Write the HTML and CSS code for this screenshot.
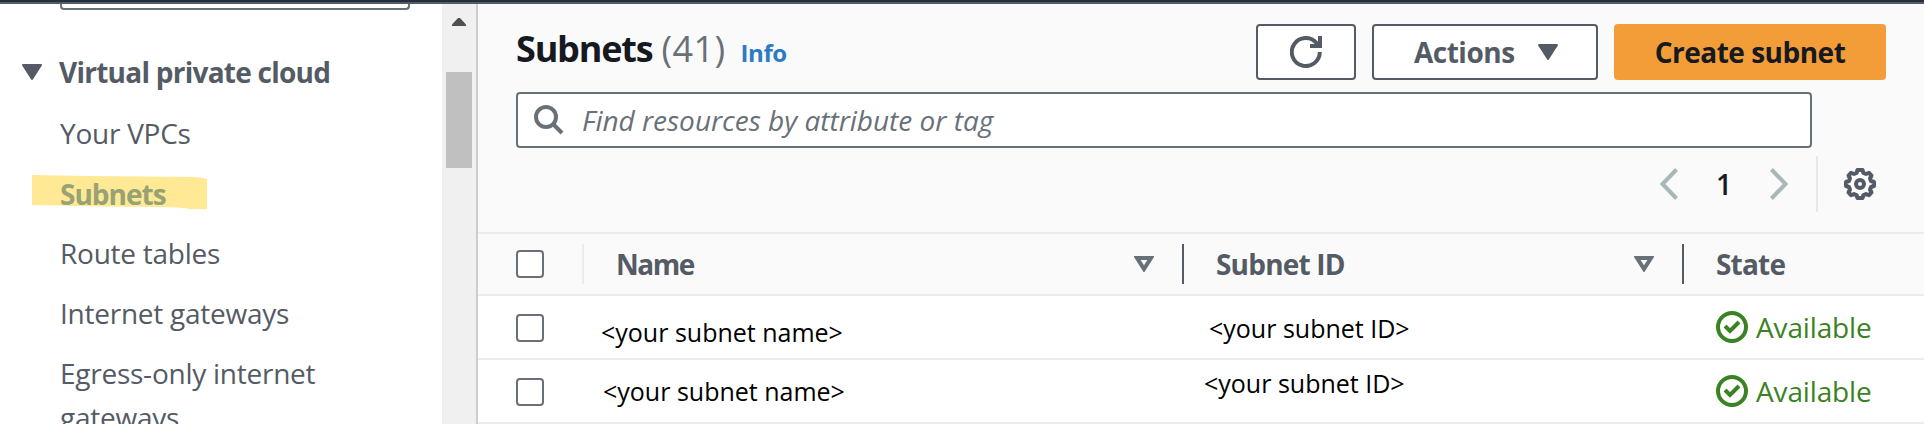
FILE: index.html
```html
<!DOCTYPE html>
<html lang="en">
<head>
<meta charset="utf-8">
<title>Subnets</title>
<link rel="stylesheet" href="styles.css">
</head>
<body>
<div class="topbar"></div>
<div class="layout">
  <nav class="sidebar">
    <div class="filter"></div>
    <div class="group">
      <svg class="caret" width="20" height="16" viewBox="0 0 20 16"><path d="M1 1h18L10 15z" fill="#545b64" stroke="#545b64" stroke-width="2" stroke-linejoin="round"/></svg>
      <span class="group-title">Virtual private cloud</span>
    </div>
    <ul class="links">
      <li>Your VPCs</li>
      <li class="active"><svg class="marker" width="175" height="35" viewBox="0 0 175 35"><path d="M0 0L60 1L161 2Q168 2 175 4V34L158 34Q148 32 130 32L70 31.500L0 30z" fill="#ffe995"/></svg><span>Subnets</span></li>
      <li>Route tables</li>
      <li>Internet gateways</li>
      <li>Egress-only internet gateways</li>
    </ul>
  </nav>
  <div class="scrollbar">
    <svg class="scroll-up" width="14" height="8" viewBox="0 0 14 8"><path d="M0 8V6.500L6 0h2l6 6.500V8z" fill="#505050"/></svg>
    <div class="thumb"></div>
  </div>
  <main class="main">
    <header class="header">
      <h1>Subnets <span class="count">(41)</span></h1>
      <a class="info">Info</a>
      <div class="actions">
        <button class="btn refresh"><svg width="32" height="32" viewBox="0 0 32 32" fill="none" stroke="#545b64" stroke-width="4"><path d="M29.800 16A14 14 0 1 1 26.500 7L29 10"/><path d="M20 10h10V0"/></svg></button>
        <button class="btn menu"><span>Actions</span><svg width="20" height="16" viewBox="0 0 20 16"><path d="M1 1h18L10 15z" fill="#545b64" stroke="#545b64" stroke-width="2" stroke-linejoin="round"/></svg></button>
        <button class="btn primary"><span>Create subnet</span></button>
      </div>
    </header>
    <div class="search">
      <svg width="30" height="30" viewBox="0 0 30 30" fill="none" stroke="#687078" stroke-width="4"><circle cx="12" cy="12" r="10"/><path d="M18.500 18.500L28 28"/></svg>
      <span>Find resources by attribute or tag</span>
    </div>
    <div class="pager">
      <svg width="18" height="32" viewBox="0 0 18 32" fill="none" stroke="#aab7b8" stroke-width="4"><path d="M16.500 1.500L2.500 16l14 14.500"/></svg>
      <span class="page">1</span>
      <svg width="18" height="32" viewBox="0 0 18 32" fill="none" stroke="#aab7b8" stroke-width="4"><path d="M1.500 1.500L15.500 16l-14 14.500"/></svg>
      <div class="settings">
        <svg width="32" height="32" viewBox="0 0 32 32" fill="none" stroke="#545b64" stroke-width="4" stroke-linejoin="round"><path d="M13.500 2h5l1 3 2.500 1 3-1.200L27.500 7.500 26 10.500l1 2.500 3 1v4l-3 1-1 2.500 1.500 3L25 27.200 22 26l-2.500 1-1 3h-5l-1-3L10 26l-3 1.200L4.500 24.500 6 21.500 5 19l-3-1v-4l3-1 1-2.500L4.500 7.500 7 4.800 10 6l2.500-1z"/><circle cx="16" cy="16" r="4"/></svg>
      </div>
    </div>
    <div class="table">
      <div class="row head">
        <div class="cell check"><i class="box"></i></div>
        <div class="cell name"><span>Name</span><svg width="20" height="16" viewBox="0 0 20 16"><path d="M3 2h14L10 13z" fill="none" stroke="#687078" stroke-width="4"/></svg></div>
        <div class="cell id"><span>Subnet ID</span><svg width="20" height="16" viewBox="0 0 20 16"><path d="M3 2h14L10 13z" fill="none" stroke="#687078" stroke-width="4"/></svg></div>
        <div class="cell state"><span>State</span></div>
      </div>
      <div class="row body first">
        <div class="cell check"><i class="box"></i></div>
        <div class="cell name">&lt;your subnet name&gt;</div>
        <div class="cell id">&lt;your subnet ID&gt;</div>
        <div class="cell state"><svg width="32" height="32" viewBox="0 0 32 32" fill="none" stroke="#3b8224" stroke-width="4"><circle cx="16" cy="16" r="14"/><path d="M9 15l5 5 9-9"/></svg><span>Available</span></div>
      </div>
      <div class="row body second">
        <div class="cell check"><i class="box"></i></div>
        <div class="cell name">&lt;your subnet name&gt;</div>
        <div class="cell id">&lt;your subnet ID&gt;</div>
        <div class="cell state"><svg width="32" height="32" viewBox="0 0 32 32" fill="none" stroke="#3b8224" stroke-width="4"><circle cx="16" cy="16" r="14"/><path d="M9 15l5 5 9-9"/></svg><span>Available</span></div>
      </div>
    </div>
  </main>
</div>
</body>
</html>
```
FILE: styles.css
```css
* { box-sizing: border-box; }
body {
  margin: 0;
  height: 424px;
  overflow: hidden;
  background: #fff;
  color: #545b64;
  font: 28px/36px "Open Sans", "Noto Sans", sans-serif;
}
svg { display: block; flex: none; }
.topbar { height: 4px; background: #232f3e; border-bottom: 2px solid #545b64; }
.layout { display: flex; height: 420px; overflow: hidden; }

.sidebar { width: 442px; flex: none; }
.filter {
  width: 350px;
  height: 6px;
  margin-left: 60px;
  border: 2px solid #687078;
  border-top: 0;
  border-radius: 0 0 4px 4px;
}
.group { display: flex; align-items: center; padding: 44px 0 0 22px; }
.group-title { margin-left: 17px; font-weight: 700; letter-spacing: -0.75px; }
.links { list-style: none; margin: 21px 0 0; padding: 0 80px 0 60px; line-height: 44px; letter-spacing: -0.25px; }
.links li { position: relative; margin-bottom: 16px; }
.links .active { color: #98a275; font-weight: 700; letter-spacing: -1px; }
.active span { position: relative; top: 1px; }
.marker { position: absolute; left: -28px; top: 4px; }

.scrollbar { width: 36px; flex: none; background: #f0f0f0; border-right: 2px solid #c8cece; padding: 14px 0 0 4px; }
.scroll-up { margin-left: 6px; }
.thumb { width: 26px; height: 96px; margin-top: 46px; background: #c0c0c0; }

.main { flex: 1; background: #fafafa; }
.header { display: flex; align-items: flex-start; padding: 20px 38px 0; height: 88px; }
h1 { margin: 0; font-size: 36px; line-height: 50px; font-weight: 700; letter-spacing: -1.2px; color: #16191f; }
.count { margin-left: 1px; font-weight: 400; letter-spacing: 0.4px; color: #687078; }
.info { margin-left: 15px; font-size: 24px; line-height: 57px; font-weight: 700; letter-spacing: -0.4px; color: #2e7bc4; }
.actions { display: flex; gap: 16px; margin-left: auto; }
.btn {
  display: flex;
  align-items: center;
  height: 56px;
  padding: 0;
  border: 2px solid #545b64;
  border-radius: 4px;
  background: #fff;
  color: #545b64;
  font: inherit;
  font-weight: 700;
  letter-spacing: -0.5px;
}
.refresh { width: 100px; justify-content: center; }
.menu { width: 226px; padding: 0 38px 0 40px; justify-content: space-between; }
.primary { width: 272px; justify-content: center; background: #f29d38; border-color: #f29d38; color: #16191f; }

.search {
  display: flex;
  align-items: center;
  width: 1296px;
  height: 56px;
  margin-left: 38px;
  padding-left: 16px;
  border: 2px solid #687078;
  border-radius: 4px;
  background: #fff;
  color: #687078;
  font-style: italic;
}
.search span { margin-left: 18px; }

.pager { display: flex; align-items: center; justify-content: flex-end; height: 56px; margin-top: 8px; padding-right: 48px; }
.page { width: 92px; text-align: center; font-weight: 600; color: #16191f; }
.settings { display: flex; align-items: center; height: 56px; margin-left: 28px; padding-left: 26px; border-left: 2px solid #e4eaea; }

.table { margin-top: 20px; border-top: 2px solid #eaeded; }
.row { display: grid; grid-template-columns: 104px 600px 500px 1fr; height: 64px; border-bottom: 2px solid #eaeded; background: #fff; }
.head { height: 62px; background: #fafafa; font-weight: 700; letter-spacing: -0.8px; }
.head .name { letter-spacing: -1.5px; }
.cell { display: flex; align-items: center; }
.check { padding-left: 38px; }
.box { flex: none; width: 28px; height: 28px; border: 2px solid #687078; border-radius: 4px; background: #fff; }
.head .name, .head .id, .head .state { height: 40px; margin-top: 10px; padding-left: 32px; border-left: 2px solid #545b64; }
.head .name { border-color: #eaeded; }
.head .name, .head .id { justify-content: space-between; padding-right: 28px; }
.body { align-items: start; }
.body .check { padding-top: 18px; }
.body .name, .body .id { color: #000; font-size: 25px; }
.first .name { padding: 18px 0 0 19px; }
.first .id { padding: 14px 0 0 27px; }
.second .name { padding: 13px 0 0 21px; }
.second .id { padding: 5px 0 0 22px; }
.body .state { gap: 8px; padding: 13px 0 0 34px; letter-spacing: -0.15px; color: #3b8224; }
```
